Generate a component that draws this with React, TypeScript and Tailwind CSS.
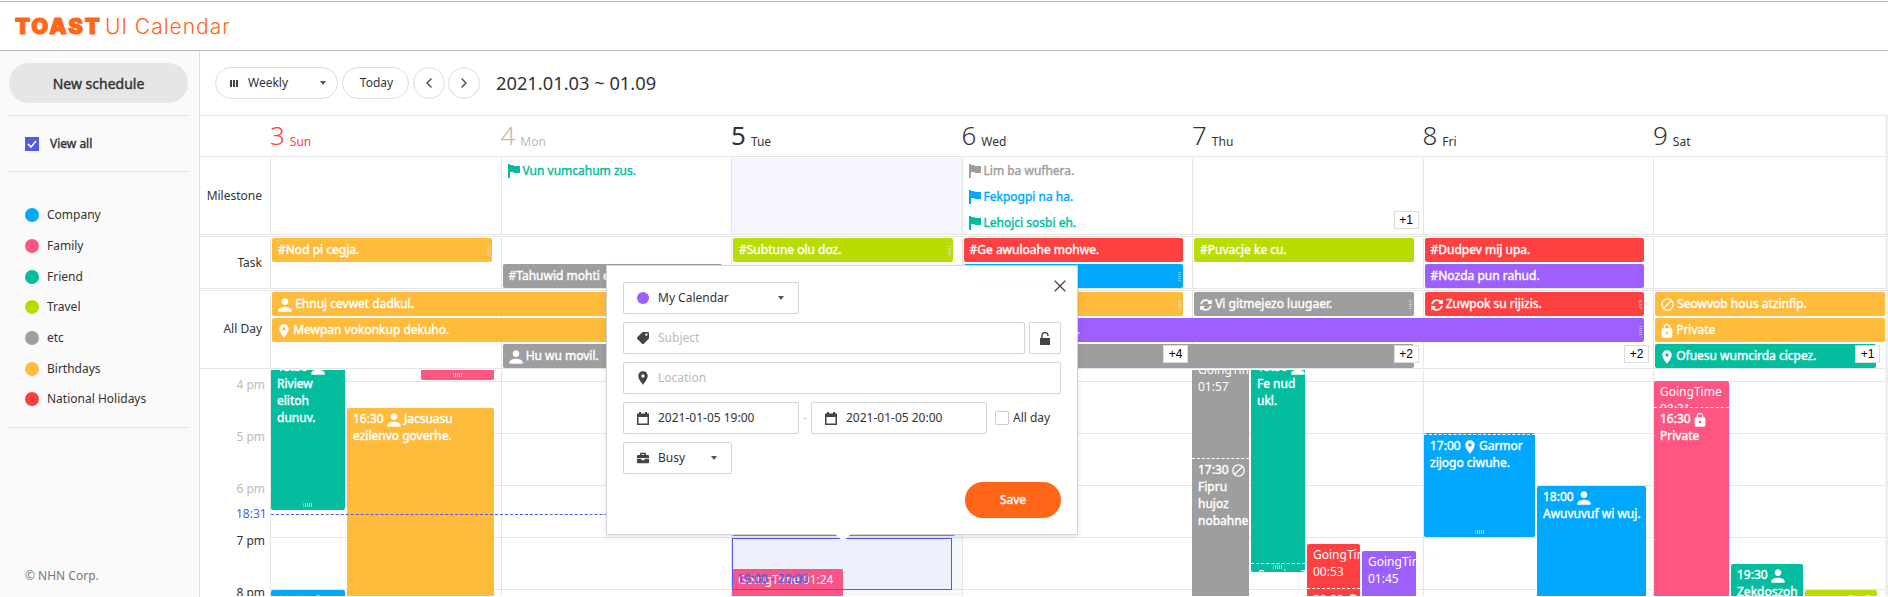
import { ChevronLeft, ChevronRight, X } from 'lucide-react';
import { FaBriefcase, FaSyncAlt, FaTag } from 'react-icons/fa';
import { MdBlock, MdLocationOn, MdLock, MdPerson } from 'react-icons/md';

const ORANGE = 'bg-[#ffbb3b]';
const GRAY = 'bg-[#9e9e9e]';
const LIME = 'bg-[#bbdc00]';
const RED = 'bg-[#ff4040]';
const BLUE = 'bg-[#00a9ff]';
const PURPLE = 'bg-[#9e5fff]';
const TEAL = 'bg-[#03bd9e]';
const PINK = 'bg-[#ff5583]';

// the reference only has the regular weight, browser-thickened
const THICK = '[-webkit-text-stroke:0.4px_currentColor]';

const colStart = ['col-start-1', 'col-start-2', 'col-start-3', 'col-start-4', 'col-start-5', 'col-start-6', 'col-start-7'];
const colSpan = ['', 'col-span-1', 'col-span-2', 'col-span-3', 'col-span-4'];
const rowStart = ['row-start-1', 'row-start-2', 'row-start-3'];

const days = [
  { num: '3', name: 'Sun', color: 'text-[#ff4040]', weight: 'font-light' },
  { num: '4', name: 'Mon', color: 'text-[#bbbbbb]', weight: 'font-light' },
  { num: '5', name: 'Tue', color: 'text-[#333333]', weight: 'font-normal' },
  { num: '6', name: 'Wed', color: 'text-[#333333]', weight: 'font-light' },
  { num: '7', name: 'Thu', color: 'text-[#333333]', weight: 'font-light' },
  { num: '8', name: 'Fri', color: 'text-[#333333]', weight: 'font-light' },
  { num: '9', name: 'Sat', color: 'text-[#333333]', weight: 'font-light' },
];

const calendars = [
  { name: 'Company', color: BLUE },
  { name: 'Family', color: PINK },
  { name: 'Friend', color: TEAL },
  { name: 'Travel', color: LIME },
  { name: 'etc', color: GRAY },
  { name: 'Birthdays', color: ORANGE },
  { name: 'National Holidays', color: RED },
];

type IconKind = 'user' | 'pin' | 'ban' | 'lock' | 'sync';

const EventIcon = ({ kind }: { kind?: IconKind }) => {
  if (kind === 'user') return <MdPerson size={20} className="inline-block -mx-[3px] -my-[4px] align-middle" />;
  if (kind === 'pin') return <MdLocationOn size={16} className="inline-block -mx-[2px] -my-[2px] align-middle" />;
  if (kind === 'ban') return <MdBlock size={15} className="inline-block -mx-px -my-[2px] align-middle" />;
  if (kind === 'lock') return <MdLock size={16} className="inline-block -mx-[2px] -my-[2px] align-middle" />;
  if (kind === 'sync') return <FaSyncAlt size={12} className="inline-block align-middle" />;
  return null;
};

const Flag = () => (
  <svg width="12" height="14" viewBox="0 0 12 14" className="shrink-0 fill-current">
    <path d="M0 0h2v14H0zM2 1h3l1 1h6v7H6L5 8H2z" />
  </svg>
);

const Grip = () => (
  <span className="absolute right-[2px] top-[7px] h-[10px] w-[3px] bg-[repeating-linear-gradient(0deg,#ffffff66_0_1px,transparent_1px_2px)]" />
);

const BottomGrip = () => (
  <span className="absolute bottom-[3px] left-1/2 h-[4px] w-[9px] -translate-x-1/2 bg-[repeating-linear-gradient(90deg,#ffffff99_0_1px,transparent_1px_2px)]" />
);

const More = ({ col, label, row }: { col: number; label: string; row: number }) => (
  <div className={`${colStart[col]} ${rowStart[row]} ${col === 6 ? 'mr-[5px]' : 'mr-[4px]'} z-10 mt-px h-[18px] w-[25px] justify-self-end border border-[#dddddd] bg-white text-center font-['Liberation_Sans',sans-serif] text-[12px] leading-[16px] text-black`}>
    {label}
  </div>
);

type Bar = {
  col: number;
  span: number;
  row: number;
  color: string;
  text: string;
  icon?: IconKind;
  grip?: boolean;
  open?: boolean;
  indent?: string;
};

const taskBars: Bar[] = [
  { col: 0, span: 1, row: 0, color: ORANGE, text: '#Nod pi cegja.', grip: true },
  { col: 1, span: 1, row: 1, color: GRAY, text: '#Tahuwid mohti ek.' },
  { col: 2, span: 1, row: 0, color: LIME, text: '#Subtune olu doz.', grip: true },
  { col: 3, span: 1, row: 0, color: RED, text: '#Ge awuloahe mohwe.' },
  { col: 3, span: 1, row: 1, color: BLUE, text: '', grip: true },
  { col: 4, span: 1, row: 0, color: LIME, text: '#Puvacje ke cu.' },
  { col: 5, span: 1, row: 0, color: RED, text: '#Dudpev mij upa.' },
  { col: 5, span: 1, row: 1, color: PURPLE, text: '#Nozda pun rahud.' },
];

const allDayBars: Bar[] = [
  { col: 0, span: 4, row: 0, color: ORANGE, text: 'Ehnuj cevwet dadkul.', icon: 'user', grip: true },
  { col: 4, span: 1, row: 0, color: GRAY, text: 'Vi gitmejezo luugaer.', icon: 'sync', grip: true },
  { col: 5, span: 1, row: 0, color: RED, text: 'Zuwpok su rijizis.', icon: 'sync', grip: true },
  { col: 6, span: 1, row: 0, color: ORANGE, text: 'Seowvob hous atzinfip.', icon: 'ban', open: true },
  { col: 0, span: 2, row: 1, color: ORANGE, text: 'Mewpan vokonkup dekuho.', icon: 'pin' },
  { col: 3, span: 3, row: 1, color: PURPLE, text: '.', indent: 'pl-[113px]', grip: true },
  { col: 6, span: 1, row: 1, color: ORANGE, text: 'Private', icon: 'lock', open: true },
  { col: 1, span: 4, row: 2, color: GRAY, text: 'Hu wu movil.', icon: 'user' },
  { col: 6, span: 1, row: 2, color: TEAL, text: 'Ofuesu wumcirda cicpez.', icon: 'pin' },
];

const BarItem = ({ bar }: { bar: Bar }) => (
  <div
    className={`${colStart[bar.col]} ${colSpan[bar.span]} ${rowStart[bar.row]} ${bar.color} ${bar.open ? 'mr-0' : 'mr-[9px]'} ${bar.indent ?? 'pl-[6px]'} ${THICK} relative z-[1] ml-[2px] h-[24px] overflow-hidden whitespace-nowrap rounded-[2px] text-[12px] leading-[24px] text-white`}
  >
    {bar.icon && <EventIcon kind={bar.icon} />} {bar.text}
    {bar.grip && <Grip />}
  </div>
);

const Cells = ({ shaded }: { shaded?: boolean }) => (
  <>
    {days.map((day, i) => (
      <div
        key={day.num}
        className={`${colStart[i]} row-start-1 row-span-3 border-l border-[#e5e5e5] ${shaded && i === 2 ? 'bg-[#f5f6fd]' : ''}`}
      />
    ))}
  </>
);

const Milestone = ({ col, row, color, text }: { col: number; row: number; color: string; text: string }) => (
  <div className={`${colStart[col]} ${rowStart[row]} ${color} ${THICK} ml-[7px] flex items-center gap-[3px] text-[12px]`}>
    <Flag />
    {text}
  </div>
);

type TimedEvent = {
  x: number;
  y: number;
  w: number;
  h: number;
  color: string;
  going?: string;
  goingH?: number;
  time?: string;
  icon?: IconKind;
  text?: string;
  coming?: number;
  grip?: boolean;
};

const timedEvents: TimedEvent[] = [
  { x: 271, y: 357, w: 74, h: 154, color: TEAL, time: '15:30', icon: 'user', text: 'Riview elitoh dunuv.', grip: true },
  { x: 347, y: 409, w: 147, h: 200, color: ORANGE, time: '16:30', icon: 'user', text: 'Jacsuasu ezilenvo goverhe.' },
  { x: 421, y: 340, w: 73, h: 41, color: PINK, grip: true },
  { x: 271, y: 591, w: 74, h: 40, color: BLUE, time: '20:00', icon: 'user' },
  { x: 732, y: 500, w: 223, h: 37, color: PINK },
  { x: 732, y: 570, w: 111, h: 60, color: PINK, going: 'GoingTime 01:24', goingH: 60 },
  { x: 1192, y: 360, w: 57, h: 300, color: GRAY, going: 'GoingTime 01:57', goingH: 100, time: '17:30', icon: 'ban', text: 'Fipru hujoz nobahnem.' },
  { x: 1251, y: 357, w: 54, h: 216, color: TEAL, time: '15:30', icon: 'user', text: 'Fe nud ukl.', coming: 9, grip: true },
  { x: 1307, y: 545, w: 53, h: 100, color: RED, going: 'GoingTime 00:53', goingH: 45, time: '20:00', icon: 'pin' },
  { x: 1362, y: 552, w: 54, h: 100, color: PURPLE, going: 'GoingTime 01:45', goingH: 60 },
  { x: 1424, y: 434, w: 111, h: 104, color: BLUE, going: '', goingH: 2, time: '17:00', icon: 'pin', text: 'Garmor zijogo ciwuhe.', grip: true },
  { x: 1537, y: 487, w: 109, h: 120, color: BLUE, time: '18:00', icon: 'user', text: 'Awuvuvuf wi wuj.' },
  { x: 1654, y: 382, w: 75, h: 220, color: PINK, going: 'GoingTime 00:31', goingH: 27, time: '16:30', icon: 'lock', text: 'Private' },
  { x: 1731, y: 565, w: 72, h: 60, color: TEAL, time: '19:30', icon: 'user', text: 'Zekdoszoh' },
  { x: 1805, y: 591, w: 72, h: 40, color: LIME, time: '20:00', icon: 'pin', text: 'Vi' },
];

const hours = [
  { label: '4 pm', color: 'text-[#bbbbbb]' },
  { label: '5 pm', color: 'text-[#bbbbbb]' },
  { label: '6 pm', color: 'text-[#bbbbbb]' },
  { label: '7 pm', color: 'text-[#333333]' },
  { label: '8 pm', color: 'text-[#333333]' },
];

const Field = ({ className, children }: { className: string; children: React.ReactNode }) => (
  <div className={`flex h-[32px] items-center rounded-[2px] border border-[#d5d5d5] pl-[13px] text-[12px] text-[#333333] ${className}`}>
    {children}
  </div>
);

const Caret = ({ className = '' }: { className?: string }) => (
  <span className={`h-0 w-0 border-x-[3.5px] border-t-[4px] border-x-transparent border-t-[#555555] ${className}`} />
);

const CalendarIcon = () => (
  <svg width="12" height="13" viewBox="0 0 12 13" className="mr-[9px] shrink-0 fill-[#444444]">
    <path d="M2 0h2v1.5h4V0h2v1.5h2V13H0V1.5h2zM1.5 5v6.5h9V5z" />
  </svg>
);

const OpenLock = () => (
  <svg width="10" height="13" viewBox="0 0 10 13" className="fill-[#444444]">
    <path d="M0 6h10v7H0z" />
    <path d="M2 6V3.5a3 3 0 0 1 6 0V4" fill="none" stroke="#444444" strokeWidth="1.4" />
  </svg>
);

const Popup = () => (
  <div className="absolute left-[606px] top-[265px] z-30 flex h-[270px] w-[472px] flex-col gap-2 border border-[#d5d5d5] bg-white p-[16px] shadow-[0_2px_6px_0_rgba(0,0,0,0.1)]">
    <X size={20} strokeWidth={1.4} className="absolute right-[7px] top-[10px] text-[#444444]" />
    <Field className="w-[176px]">
      <span className="mr-[9px] h-[12px] w-[12px] rounded-full bg-[#9e5fff]" />
      My Calendar
      <Caret className="ml-auto mr-[14px]" />
    </Field>
    <div className="flex gap-[4px]">
      <Field className="flex-1">
        <FaTag size={12} className="mr-[9px] -scale-x-100 text-[#444444]" />
        <span className="text-[#bbbbbb]">Subject</span>
      </Field>
      <div className="flex h-[32px] w-[32px] items-center justify-center rounded-[2px] border border-[#d5d5d5]">
        <OpenLock />
      </div>
    </div>
    <Field className="w-full">
      <MdLocationOn size={16} className="-ml-[2px] mr-[7px] text-[#444444]" />
      <span className="text-[#bbbbbb]">Location</span>
    </Field>
    <div className="flex items-center">
      <Field className="w-[176px]">
        <CalendarIcon />
        2021-01-05 19:00
      </Field>
      <span className="w-[12px] text-center text-[12px] text-[#cccccc]">-</span>
      <Field className="w-[176px]">
        <CalendarIcon />
        2021-01-05 20:00
      </Field>
      <span className="ml-[8px] mr-[4px] h-[14px] w-[14px] rounded-[1px] border border-[#cccccc]" />
      <span className="text-[12px] text-[#333333]">All day</span>
    </div>
    <Field className="w-[109px]">
      <FaBriefcase size={12} className="mr-[9px] text-[#444444]" />
      Busy
      <Caret className="ml-auto mr-[14px]" />
    </Field>
    <div className={`flex h-[36px] w-[96px] items-center justify-center self-end rounded-full bg-[#ff6618] text-[12px] text-white ${THICK}`}>
      Save
    </div>
    <span className="absolute left-[228px] top-full h-0 w-0 border-x-[8px] border-t-[7px] border-x-transparent border-t-white" />
  </div>
);

const Sidebar = () => (
  <aside className="flex w-[200px] shrink-0 flex-col border-r border-[#dddddd] bg-[#fafafa] px-[9px] pt-[12px] pb-[12px] text-[12px] text-[#333333]">
    <div className={`flex h-[40px] w-[179px] items-center justify-center rounded-full bg-[#e6e6e6] text-[14px] ${THICK}`}>
      New schedule
    </div>
    <div className="mt-[12px] border-t border-[#e5e5e5]" />
    <div className="flex h-[55px] items-center pl-[16px]">
      <span className="mr-[11px] flex h-[14px] w-[14px] items-center justify-center bg-[#515ce6]">
        <svg width="10" height="8" viewBox="0 0 10 8" fill="none" stroke="white" strokeWidth="1.6">
          <path d="M1 4l3 3 5-6" />
        </svg>
      </span>
      <span className={THICK}>View all</span>
    </div>
    <div className="border-t border-[#e5e5e5]" />
    <div className="mt-[28px] flex flex-col pl-[16px]">
      {calendars.map((cal) => (
        <div key={cal.name} className="flex h-[30.7px] items-center">
          <span className={`mr-[8px] h-[14px] w-[14px] rounded-full ${cal.color}`} />
          {cal.name}
        </div>
      ))}
    </div>
    <div className="mt-[12px] border-t border-[#e5e5e5]" />
    <div className="mt-auto pl-[16px] text-[#777777]">© NHN Corp.</div>
  </aside>
);

const Toolbar = () => (
  <div className="flex h-[64px] items-start pl-[15px] pt-[16px] text-[12px] text-[#333333]">
    <div className="flex h-[32px] w-[123px] items-center rounded-full border border-[#dddddd] pl-[14px]">
      <span className="mr-[10px] flex gap-px">
        <i className="h-[7px] w-[2px] bg-[#444444]" />
        <i className="h-[7px] w-[2px] bg-[#444444]" />
        <i className="h-[7px] w-[2px] bg-[#444444]" />
      </span>
      Weekly
      <Caret className="ml-auto mr-[11px]" />
    </div>
    <div className="ml-[4px] flex h-[32px] w-[67px] items-center justify-center rounded-full border border-[#dddddd] pl-[2px]">Today</div>
    <div className="ml-[4px] flex h-[32px] w-[32px] items-center justify-center rounded-full border border-[#dddddd]">
      <ChevronLeft size={16} strokeWidth={2.4} className="text-[#555555]" />
    </div>
    <div className="ml-[3px] flex h-[32px] w-[32px] items-center justify-center rounded-full border border-[#dddddd]">
      <ChevronRight size={16} strokeWidth={2.4} className="text-[#555555]" />
    </div>
    <div className="ml-[16px] text-[18.3px] leading-[32px]">2021.01.03 ~ 01.09</div>
  </div>
);

const TimeEvent = ({ ev }: { ev: TimedEvent }) => (
  <div
    className={`absolute flex flex-col overflow-hidden rounded-[2px] text-[12px] leading-[17px] text-white ${ev.color}`}
    style={{ left: ev.x - 200, top: ev.y - 371, width: ev.w, height: ev.h }}
  >
    {ev.goingH !== undefined && (
      <div
        className={`shrink-0 overflow-hidden ${ev.time ? 'border-b border-dashed border-white' : ''}`}
        style={{ height: ev.goingH }}
      >
        {ev.going && <div className="pl-[6px] pt-[2px]">{ev.going}</div>}
      </div>
    )}
    {ev.time && (
      <div className={`min-h-0 flex-1 overflow-hidden pl-[6px] pt-[2px] ${THICK}`}>
        {ev.time} <EventIcon kind={ev.icon} /> {ev.text}
      </div>
    )}
    {ev.coming && (
      <div className="shrink-0 overflow-hidden border-t border-dashed border-white pl-[6px] pt-[2px]" style={{ height: ev.coming }}>
        ComingTime
      </div>
    )}
    {ev.grip && <BottomGrip />}
  </div>
);

const TimeGrid = () => (
  <div className="relative flex h-[226px] overflow-hidden">
    <div className="w-[70px] shrink-0 pt-[7px] pr-[5px] text-right text-[12px] leading-[16px]">
      {hours.map((h) => (
        <div key={h.label} className={`h-[52px] ${h.color}`}>
          {h.label}
        </div>
      ))}
    </div>
    <div className="grid grid-cols-[repeat(6,230.5px)_232px]">
      {days.map((day, i) => (
        <div key={day.num} className={`border-l border-[#e5e5e5] ${i === 2 ? 'bg-[#f7f8fe]' : ''}`}>
          <div className="h-[12px] border-b border-[#e5e5e5]" />
          {hours.map((h) => (
            <div key={h.label} className="h-[52px] border-b border-[#e5e5e5]" />
          ))}
        </div>
      ))}
    </div>
    {timedEvents.map((ev, i) => (
      <TimeEvent key={i} ev={ev} />
    ))}
    {/* now line */}
    <div className="absolute left-[36px] top-[136px] z-10 text-[12px] leading-[16px] text-[#515ce6]">18:31</div>
    <div className="absolute left-[71px] top-[144px] z-10 w-[461px] border-t border-dashed border-[#515ce6]" />
    {/* drag selection */}
    <div className={`absolute left-[532px] top-[168px] z-10 flex h-[52px] w-[220px] items-end border border-[#515ce6] bg-[#515ce6]/5 pb-[2px] pl-[4px] text-[12px] leading-[16px] text-[#515ce6] ${THICK}`}>
      19:00 - 20:00
    </div>
  </div>
);

export default function App() {
  return (
    <div className="relative flex h-[597px] w-[1888px] flex-col overflow-hidden bg-white font-['Noto_Sans',sans-serif]">
      <header className="mt-px flex h-[50px] shrink-0 items-center border-y border-[#bbbbbb] pl-[15px] text-[#ff6618]">
        <span className="w-[90px] font-['Inter',sans-serif] text-[22px] font-black leading-none tracking-[2px] [-webkit-text-stroke:1px_#ff6618]">TOAST</span>
        <span className="font-['Inter',sans-serif] text-[21px] font-light leading-none tracking-[1px]">UI Calendar</span>
      </header>
      <div className="flex min-h-0 flex-1">
        <Sidebar />
        <main className="min-w-0 flex-1">
          <Toolbar />
          <div className="flex">
            <div className="min-w-0 flex-1">
              <div className="flex h-[42px] border-y border-[#e5e5e5]">
                <div className="w-[70px] shrink-0" />
                <div className="grid grid-cols-[repeat(6,230.5px)_232px]">
                  {days.map((day) => (
                    <div key={day.num} className={`flex items-baseline gap-[5px] pt-[2px] ${day.color}`}>
                      <span className={`text-[26px] leading-[34px] ${day.weight}`}>{day.num}</span>
                      <span className="translate-y-px text-[12px]">{day.name}</span>
                    </div>
                  ))}
                </div>
              </div>
              <div className="flex h-[78px] border-b border-[#e5e5e5]">
                <div className="w-[70px] shrink-0 pr-[8px] pt-[31px] text-right text-[12px] leading-[16px] text-[#333333]">Milestone</div>
                <div className="grid grid-cols-[repeat(6,230.5px)_232px] grid-rows-[26px_26px_26px] overflow-hidden pt-px">
                  <Cells shaded />
                  <div className="relative col-start-3 row-start-1 mr-[9px]">
                    <Grip />
                  </div>
                  <Milestone col={1} row={0} color="text-[#03bd9e]" text="Vun vumcahum zus." />
                  <Milestone col={3} row={0} color="text-[#9e9e9e]" text="Lim ba wufhera." />
                  <Milestone col={3} row={1} color="text-[#00a9ff]" text="Fekpogpi na ha." />
                  <Milestone col={3} row={2} color="text-[#03bd9e]" text="Lehojci sosbi eh." />
                  <More col={4} row={2} label="+1" />
                </div>
              </div>
              <div className="h-px" />
              <div className="flex h-[53px] border-y border-[#e5e5e5]">
                <div className="w-[70px] shrink-0 pr-[8px] pt-[18px] text-right text-[12px] leading-[16px] text-[#333333]">Task</div>
                <div className="grid grid-cols-[repeat(6,230.5px)_232px] grid-rows-[24px_24px] gap-y-[2px] pt-px">
                  {days.map((day, i) => (
                    <div key={day.num} className={`${colStart[i]} row-start-1 row-span-2 border-l border-[#e5e5e5]`} />
                  ))}
                  {taskBars.map((bar, i) => (
                    <BarItem key={i} bar={bar} />
                  ))}
                </div>
              </div>
              <div className="h-px" />
              <div className="flex h-[79px] border-y border-[#e5e5e5]">
                <div className="w-[70px] shrink-0 pr-[8px] pt-[30px] text-right text-[12px] leading-[16px] text-[#333333]">All Day</div>
                <div className="grid grid-cols-[repeat(6,230.5px)_232px] grid-rows-[24px_24px_24px] gap-y-[2px] pt-px">
                  <Cells />
                  {allDayBars.map((bar, i) => (
                    <BarItem key={i} bar={bar} />
                  ))}
                  <More col={3} row={2} label="+4" />
                  <More col={4} row={2} label="+2" />
                  <More col={5} row={2} label="+2" />
                  <More col={6} row={2} label="+1" />
                </div>
              </div>
              <div className="h-px" />
              <TimeGrid />
            </div>
            {/* scrollbar track */}
            <div className="w-[3px] shrink-0 bg-[#efefef]" />
          </div>
        </main>
      </div>
      <Popup />
    </div>
  );
}
